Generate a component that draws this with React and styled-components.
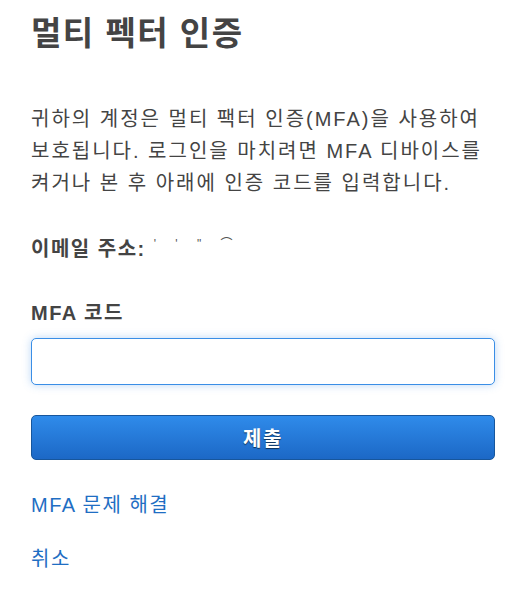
import styled, { createGlobalStyle } from "styled-components";

const GlobalStyle = createGlobalStyle`
  body {
    margin: 0;
    background: #fff;
    font-family: "Liberation Sans", Arial, "Noto Sans CJK KR", sans-serif;
    color: #444;
  }
`;

const Page = styled.div`
  width: 513px;
  padding: 14px 18px 0 31px;
  box-sizing: border-box;
`;

const Title = styled.h1`
  margin: 0;
  font-size: 33px;
  font-weight: 700;
  line-height: 40px;
  letter-spacing: 1.5px;
  color: #444;
`;

const Intro = styled.p`
  margin: 49px 0 0;
  font-size: 20px;
  line-height: 32px;
  letter-spacing: 2px;
  word-break: keep-all;
  color: #444;
`;

const Email = styled.div`
  margin-top: 38px;
  display: flex;
  align-items: baseline;
  font-size: 20px;
  line-height: 24px;
  letter-spacing: 1.5px;
`;

const EmailLabel = styled.span`
  font-weight: 700;
`;

const Masked = styled.span`
  margin-left: 8px;
  font-size: 12px;
  letter-spacing: 8px;
  color: #555;
  position: relative;
  top: -8px;
`;

const Field = styled.div`
  margin-top: 37px;
  display: flex;
  flex-direction: column;
`;

const Label = styled.label`
  font-size: 20px;
  font-weight: 700;
  line-height: 24px;
  letter-spacing: 1.5px;
  color: #444;
`;

const Input = styled.input`
  margin-top: 13px;
  height: 47px;
  box-sizing: border-box;
  border: 1px solid #3a8ee6;
  border-radius: 5px;
  box-shadow: 0 0 8px rgba(60, 140, 230, 0.35);
  outline: none;
  font-size: 18px;
  padding: 0 10px;
`;

const Submit = styled.button`
  margin-top: 30px;
  width: 100%;
  height: 45px;
  border: 1px solid #17569c;
  border-radius: 5px;
  background: linear-gradient(#2f8bea, #1c68c6);
  color: #fff;
  font-family: inherit;
  font-size: 20px;
  font-weight: 700;
  letter-spacing: 1.5px;
  text-shadow: 0 1px 1px rgba(0, 0, 0, 0.6);
  cursor: pointer;
`;

const Links = styled.div`
  margin-top: 32px;
  display: flex;
  flex-direction: column;
  gap: 28px;
`;

const Link = styled.a`
  font-size: 20px;
  line-height: 26px;
  letter-spacing: 1.5px;
  color: #1f6ec3;
  text-decoration: none;
`;

export default function App() {
  return (
    <Page>
      <GlobalStyle />
      <Title>멀티 펙터 인증</Title>
      <Intro>
        귀하의 계정은 멀티 팩터 인증(MFA)을 사용하여 보호됩니다. 로그인을
        마치려면 MFA 디바이스를 켜거나 본 후 아래에 인증 코드를 입력합니다.
      </Intro>
      <Email>
        <EmailLabel>이메일 주소:</EmailLabel>
        <Masked>' '  " ⌒</Masked>
      </Email>
      <Field>
        <Label htmlFor="mfa">MFA 코드</Label>
        <Input id="mfa" type="text" />
      </Field>
      <Submit>제출</Submit>
      <Links>
        <Link href="#">MFA 문제 해결</Link>
        <Link href="#">취소</Link>
      </Links>
    </Page>
  );
}
